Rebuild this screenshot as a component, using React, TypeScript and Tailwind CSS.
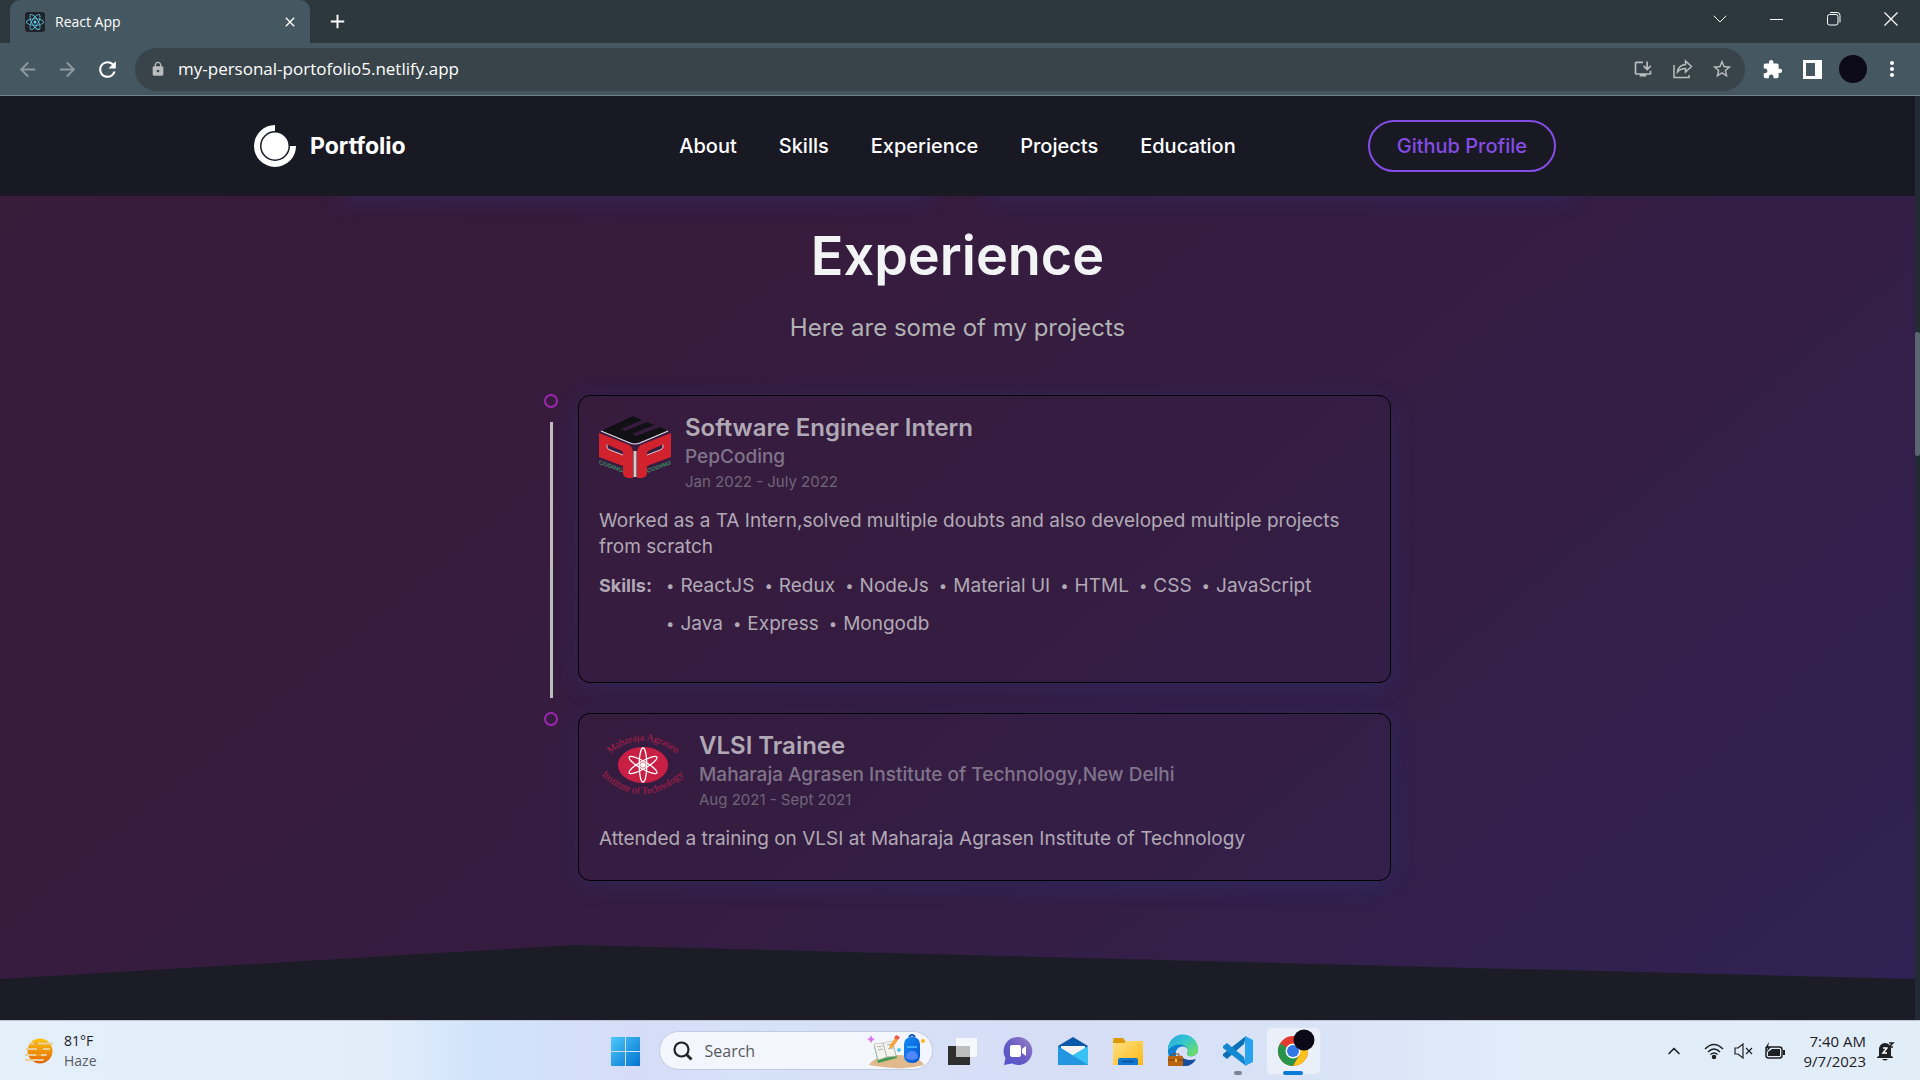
import React from "react";
import {
  MdArrowBack,
  MdArrowForward,
  MdClose,
  MdExtension,
  MdInstallDesktop,
  MdLock,
  MdMoreVert,
  MdRefresh,
  MdStarBorder,
  MdAdd,
} from "react-icons/md";
import { FaReact } from "react-icons/fa";
import { ChevronDown, ChevronUp } from "lucide-react";

const navLinks = ["About", "Skills", "Experience", "Projects", "Education"];

type Job = {
  role: string;
  company: string;
  date: string;
  text: string;
  skills: string[];
  logo: React.ReactNode;
};

function PepLogo() {
  return (
    <svg width="72" height="72" viewBox="0 0 72 72" role="img" aria-label="PepCoding" className="shrink-0 overflow-visible">
      <path d="M34 0 2 15 34 28 69 15 61 11 37 20 33 18 55 9 48 6 26 15 22 13 43 4Z" fill="#101015" />
      <path d="M2 15 31 27Q36 29 41 27L69 15" fill="none" stroke="#e6dfe6" strokeWidth="1.2" />
      <path fillRule="evenodd" fill="#d2222d" d="M0 17 28 28Q34 30 34 37V62H29Q24 61 24 57V50L0 41ZM8 28.500V31Q8 33 11 34L24 39V37Q24 35 21 34Z" />
      <path fillRule="evenodd" fill="#d2222d" d="M72 17 44 28Q38 30 38 37V62H43Q48 61 48 57V50L72 41ZM64 28.500V31Q64 33 61 34L48 39V37Q48 35 51 34Z" />
      <path d="M8 28.500V31Q8 33 11 34L24 39M64 28.500V31Q64 33 61 34L48 39" fill="none" stroke="#d9ccd3" strokeWidth="1" />
      <path d="M36 35V61" stroke="#cfcfcf" strokeWidth="3" />
      <text transform="matrix(1 .36 0 1 0 48)" fontFamily="Liberation Sans" fontWeight="700" fontSize="6" fill="#3d8d63">CODING</text>
      <text transform="matrix(1 -.36 0 1 48 57)" fontFamily="Liberation Sans" fontWeight="700" fontSize="6" fill="#3d8d63">CODING</text>
    </svg>
  );
}

function InstituteLogo() {
  return (
    <svg width="86" height="64" viewBox="0 0 86 64" role="img" aria-label="Maharaja Agrasen Institute of Technology" className="shrink-0 overflow-visible">
      <defs>
        <path id="arc-top" d="M8 22Q44 -9 80 22" />
        <path id="arc-bottom" d="M-3 36Q43 84 90 36" />
      </defs>
      <ellipse cx="44" cy="31" rx="25" ry="18" fill="#c91f45" />
      <g fill="none" stroke="#fff" strokeWidth="1.3">
        <ellipse cx="44" cy="31" rx="3.8" ry="17" />
        <ellipse cx="44" cy="31" rx="3.8" ry="16" transform="rotate(60 44 31)" />
        <ellipse cx="44" cy="31" rx="3.8" ry="16" transform="rotate(-60 44 31)" />
      </g>
      <circle cx="44" cy="31" r="2.8" fill="#fff" />
      <g fontFamily="Liberation Serif" fontSize="10" fill="#b51f49">
        <text textAnchor="middle"><textPath href="#arc-top" startOffset="50%">Maharaja Agrasen</textPath></text>
        <text textAnchor="middle"><textPath href="#arc-bottom" startOffset="50%">Institute of Technology</textPath></text>
      </g>
    </svg>
  );
}

const jobs: Job[] = [
  {
    role: "Software Engineer Intern",
    company: "PepCoding",
    date: "Jan 2022 - July 2022",
    text: "Worked as a TA Intern,solved multiple doubts and also developed multiple projects from scratch",
    skills: ["ReactJS", "Redux", "NodeJs", "Material UI", "HTML", "CSS", "JavaScript", "Java", "Express", "Mongodb"],
    logo: <PepLogo />,
  },
  {
    role: "VLSI Trainee",
    company: "Maharaja Agrasen Institute of Technology,New Delhi",
    date: "Aug 2021 - Sept 2021",
    text: "Attended a training on VLSI at Maharaja Agrasen Institute of Technology",
    skills: [],
    logo: <InstituteLogo />,
  },
];

function BrowserChrome() {
  return (
    <div className="shrink-0 bg-[#2d383e] font-['Open_Sans',sans-serif] text-white">
      <div className="flex h-[43px] items-stretch pl-[10px]">
        <div className="flex w-[300px] items-center rounded-t-[10px] bg-[#455760] pl-[15px] pr-3">
          <span className="grid size-5 place-items-center rounded-[3px] bg-[#20232a]">
            <FaReact size={18} color="#61c9e8" />
          </span>
          <span className="ml-[10px] flex-1 text-[14px]">React App</span>
          <button aria-label="Close tab"><MdClose size={16} /></button>
        </div>
        <button aria-label="New tab" className="ml-[16px]"><MdAdd size={23} /></button>
        <div className="ml-auto flex items-center pb-[6px]">
          <button aria-label="Search tabs" className="grid w-[57px] place-items-center"><ChevronDown size={24} strokeWidth={1} /></button>
          <button aria-label="Minimize" className="grid w-[57px] place-items-center"><svg width="14" height="14"><path d="M0 7.5h13" stroke="white" /></svg></button>
          <button aria-label="Restore" className="grid w-[57px] place-items-center">
            <svg width="14" height="14" fill="none" stroke="white"><rect x=".5" y="2.5" width="10.5" height="10.5" rx="2" /><path d="M3 .5h7a3 3 0 0 1 3 3v7" /></svg>
          </button>
          <button aria-label="Close" className="grid w-[58px] place-items-center"><svg width="14" height="14"><path d="m.5.5 13 13m0-13-13 13" stroke="white" strokeWidth="1.2" /></svg></button>
        </div>
      </div>
      <div className="flex h-[53px] items-center border-b border-[#75828a] bg-[#455760] pl-[16px] pr-4">
        <button aria-label="Back" className="text-[#8e9a9f]"><MdArrowBack size={23} /></button>
        <button aria-label="Forward" className="ml-[17px] text-[#8e9a9f]"><MdArrowForward size={23} /></button>
        <button aria-label="Reload" className="ml-[16px]"><MdRefresh size={25} /></button>
        <div className="ml-[15px] flex h-[43px] flex-1 items-center rounded-full bg-[#38444a] pl-[15px] pr-3 text-[#babdbf]">
          <MdLock size={16} />
          <input aria-label="Address" className="ml-[12px] flex-1 bg-transparent text-[17px] text-white outline-none" defaultValue="my-personal-portofolio5.netlify.app" />
          <button aria-label="Install app"><MdInstallDesktop size={20} /></button>
          <button aria-label="Share" className="ml-5">
            <svg width="20" height="20" viewBox="0 0 20 20" fill="none" stroke="currentColor" strokeWidth="1.5"><path d="M1 6v12.5h15V16M12.500 2v3.500C7 6 5 9 4.500 13 6.500 10.500 9 9.500 12.500 9.500V13l6-5.500z" /></svg>
          </button>
          <button aria-label="Bookmark" className="ml-[18px]"><MdStarBorder size={22} /></button>
        </div>
        <button aria-label="Extensions" className="ml-[17px]"><MdExtension size={21} /></button>
        <button aria-label="Side panel" className="ml-5">
          <svg width="19" height="19"><path fillRule="evenodd" fill="white" d="M0 0h19v19H0ZM3 3v13h9V3Z" /></svg>
        </button>
        <button aria-label="Profile" className="ml-[17px] size-7 rounded-full bg-[#0c0a18]" />
        <button aria-label="Menu" className="ml-[13px]"><MdMoreVert size={24} /></button>
      </div>
    </div>
  );
}

function SiteHeader() {
  return (
    <header className="bg-[#191924]">
      <div className="mx-auto grid h-[100px] max-w-[1407px] grid-cols-[1fr_auto_1fr] items-center">
        <a href="#home" className="flex items-center gap-[14px] text-[23px] font-bold text-white">
          <svg width="42" height="42" viewBox="0 0 42 42">
            <circle cx="21" cy="21" r="13.500" fill="white" />
            <path d="M21 3a18 18 0 1 0 18 18" fill="none" stroke="white" strokeWidth="6" />
          </svg>
          Portfolio
        </a>
        <nav className="flex gap-[42px] text-[20px] font-medium text-white">
          {navLinks.map((l) => (
            <a key={l} href={"#" + l.toLowerCase()}>{l}</a>
          ))}
        </nav>
        <div className="flex justify-end pr-[105px]">
          <a href="#github" className="flex h-[52px] items-center rounded-full border-2 border-[#854ce6] px-[27px] text-[20px] font-medium whitespace-nowrap text-[#854ce6]">Github Profile</a>
        </div>
      </div>
    </header>
  );
}

function TimelineRow({ job, last }: { job: Job; last: boolean }) {
  return (
    <li className="flex gap-5">
      <div className="flex w-[14px] flex-col items-center pt-[14px]">
        <span className="size-[14px] shrink-0 rounded-full border-2 border-[#9c27b0]" />
        {!last && <span className="mt-[14px] w-[3px] flex-1 bg-[#bdbdbd]" />}
      </div>
      <div className="flex-1 py-[15px]">
        <article className="rounded-xl border border-black px-5 pt-5 pb-7 shadow-[0_4px_24px_rgba(23,92,230,0.15)]">
          <div className="flex gap-[14px]">
            {job.logo}
            <div>
              <h3 className="text-[24px] leading-[24px] font-semibold text-[#b1a9b5]">{job.role}</h3>
              <p className="mt-1 text-[19px] leading-[26px] font-medium text-[#80748a]">{job.company}</p>
              <p className="text-[15px] leading-[24px] text-[#716579]">{job.date}</p>
            </div>
          </div>
          <p className="mt-[14px] text-[19px] leading-[26px] text-[#b1a9b5]">{job.text}</p>
          {job.skills.length > 0 && (
            <div className="mt-[7px] mb-[11px] flex gap-[14px] leading-[38px] text-[#b1a9b5]">
              <b className="text-[18px]">Skills:</b>
              <ul className="flex flex-wrap gap-x-[10px] pr-4 text-[19px]">
                {job.skills.map((s) => (
                  <li key={s} className="flex gap-[6px]">
                    <span className="text-[15px]">•</span>
                    {s}
                  </li>
                ))}
              </ul>
            </div>
          )}
        </article>
      </div>
    </li>
  );
}

function Experience() {
  return (
    <section id="experience" className="relative overflow-hidden bg-[linear-gradient(140deg,#391b3a_0%,#351c40_50%,#312253_100%)] px-6 pt-8 pb-[83px] [clip-path:polygon(0_0,100%_0,100%_100%,30%_calc(100%-34px),0_100%)]">
      <div className="absolute inset-x-[340px] -top-5 flex gap-[56px]">
        <span className="h-5 flex-1 shadow-[0_4px_24px_rgba(23,92,230,0.15)]" />
        <span className="h-5 flex-1 shadow-[0_4px_24px_rgba(23,92,230,0.15)]" />
      </div>
      <h2 className="text-center text-[54px] leading-[56px] font-semibold text-[#f2f3f4]">Experience</h2>
      <p className="mt-7 text-center text-[24px] leading-8 text-[#b1b2b3]">Here are some of my projects</p>
      <ul className="mx-auto mt-9 max-w-[867px] pl-5">
        {jobs.map((j, i) => (
          <TimelineRow key={j.role} job={j} last={i === jobs.length - 1} />
        ))}
      </ul>
    </section>
  );
}

function AppIcon({ label, children, className = "" }: { label: string; children: React.ReactNode; className?: string }) {
  return (
    <button aria-label={label} className={"relative grid h-12 w-[55px] place-items-center " + className}>
      <svg width="32" height="32" viewBox="0 0 32 32" className="overflow-visible">{children}</svg>
    </button>
  );
}

function Taskbar() {
  return (
    <footer className="grid h-[60px] shrink-0 grid-cols-[1fr_auto_1fr] items-center border-t border-[#bfc5d2] bg-[linear-gradient(90deg,#e3eff9_0%,#e1edf9_20%,#d1e3fb_25%,#d6dcf7_33%,#d5e2f8_38%,#d6def6_55%,#d8e3f7_68%,#e0edf9_80%,#e1eef8_100%)] font-['Open_Sans',sans-serif] text-[#1e2124]">
      <svg width="0" height="0" className="absolute">
        <defs>
          <linearGradient id="win" x1="0" y1="0" x2="1" y2="1"><stop stopColor="#4cc9fb" /><stop offset="1" stopColor="#0373d1" /></linearGradient>
          <linearGradient id="sun" x1="0" y1="0" x2="0" y2="1"><stop stopColor="#fbc40d" /><stop offset="1" stopColor="#e36309" /></linearGradient>
          <linearGradient id="chat" x1="1" y1="0" x2="0" y2="1"><stop stopColor="#9a86c4" /><stop offset=".5" stopColor="#6a5cc6" /><stop offset="1" stopColor="#5254c9" /></linearGradient>
          <linearGradient id="folder" x1="0" y1="0" x2="1" y2="1"><stop stopColor="#ffe084" /><stop offset="1" stopColor="#fdb913" /></linearGradient>
          <linearGradient id="edge" x1="0" y1="0" x2="1" y2="1"><stop stopColor="#2a9fe0" /><stop offset=".4" stopColor="#31c5d2" /><stop offset="1" stopColor="#79e34b" /></linearGradient>
          <linearGradient id="bag" x1="0" y1="0" x2="1" y2="1"><stop stopColor="#158bf5" /><stop offset="1" stopColor="#0752cf" /></linearGradient>
        </defs>
      </svg>
      <button className="flex items-center gap-[11px] pl-[25px] text-left">
        <svg width="28" height="28" viewBox="0 0 28 28">
          <circle cx="15" cy="14" r="12.500" fill="url(#sun)" />
          <path d="M5 6.500h22M2 12h22M0 18h21M0 23h18" stroke="#e8cf9b" strokeWidth="2.200" strokeLinecap="round" />
          <path d="M9 6.500h4M12 12h6M11 18h5" stroke="#f59e0b" strokeWidth="2.200" />
        </svg>
        <span className="text-[14px] leading-5">
          <span className="block">81°F</span>
          <span className="block text-[#595d62]">Haze</span>
        </span>
      </button>
      <div className="flex items-center pr-[2px]">
        <AppIcon label="Start">
          <path d="M2 2h14v14H2zM17 2h14v14H17zM2 17h14v14H2zM17 17h14v14H17z" fill="url(#win)" />
        </AppIcon>
        <label className="mr-[3px] ml-[6px] flex h-[39px] w-[274px] items-center rounded-full border border-[#c2cbe0] bg-[#f3f6fd] pl-[13px]">
          <svg width="20" height="20" viewBox="0 0 20 20" fill="none" stroke="#222" strokeWidth="2.200"><circle cx="8.500" cy="8.500" r="7" /><path d="m13.500 13.500 5 5" strokeWidth="2.800" /></svg>
          <input aria-label="Search" placeholder="Search" className="ml-3 w-[150px] bg-transparent text-[16px] outline-none placeholder:text-[#55585c]" />
          <svg width="62" height="36" viewBox="0 0 62 36" className="ml-[10px]">
            <path d="M4 32Q10 22 32 22T59 32Q45 36 30 35T4 32Z" fill="#e0b98c" />
            <path d="m9 13 19-3 4 15-19 5z" fill="#459b4d" />
            <path d="m9 11 9-1 9-2 4 15-9 1-9 3z" fill="#f4f4ef" stroke="#b8bcc0" strokeWidth=".7" />
            <path d="m18 10 4 15M12 14l5-1m-4 4 5-1m4-4 5-1m-4 5 5-1" stroke="#9aa5a8" strokeWidth=".8" />
            <path d="m24 16 1-4 5-7 3 2-5 7z" fill="#f6a53b" /><path d="m29 5 2-3 4 2-2 3z" fill="#ec5a44" />
            <path d="M2 6q3 0 4-4 1 4 4 4-3 1-4 4Q5 7 2 6Z" fill="#d976ee" />
            <circle cx="34" cy="17" r="2" fill="#54c8ef" /><circle cx="58" cy="8" r="2" fill="#fbb413" />
            <path d="M44 4q3-4 6 0" fill="none" stroke="#0a51b5" strokeWidth="2" />
            <rect x="39" y="4" width="16" height="26" rx="7" fill="url(#bag)" />
            <path d="M42 14h10" stroke="#4ec3ff" strokeWidth="1.500" />
            <path d="M41 25q0-7 6-7t6 7q-6 4-12 0Z" fill="#4f86fa" />
          </svg>
        </label>
        <AppIcon label="Task view">
          <path d="M1 11h22v19H1z" fill="#2f2f2f" /><path d="M9 3h21v19H9z" fill="#fafafa" opacity=".9" /><path d="M9 11h14v11H9z" fill="#bdbdbd" />
        </AppIcon>
        <AppIcon label="Chat">
          <path d="M16 2a14 14 0 1 1-6 26.500L2 30l1.500-7A14 14 0 0 1 16 2Z" fill="url(#chat)" />
          <rect x="8" y="10" width="11" height="12" rx="2" fill="#fff" /><path d="m20 14 4-3v10l-4-3z" fill="#fff" />
        </AppIcon>
        <AppIcon label="Mail">
          <path d="M1 11 16 2l15 9v5H1z" fill="#0a58a8" /><path d="M4 11h24v14H4z" fill="#f3f3f3" /><path d="M31 11v19H1V29z" fill="#38c2f3" /><path d="M1 11 31 30H1z" fill="#2396e2" />
        </AppIcon>
        <AppIcon label="File Explorer">
          <path d="M1 5q0-2 2-2h8l3 4h15q2 0 2 2v4H1z" fill="#dc9a08" /><path d="M1 8h11l3-2h16v24H1z" fill="url(#folder)" /><path d="M6 30v-5q0-2 2-2h16q2 0 2 2v5z" fill="#1176cf" /><path d="M10 26.500h12" stroke="#075199" strokeWidth="1.500" />
        </AppIcon>
        <AppIcon label="Edge">
          <path d="M1 16A15 15 0 0 1 31 14c0 6-5 8-9 7-3-1-2-3-1-5 0-5-9-7-12 0-1 7 3 11 8 14C7 31 1 25 1 16Z" fill="#0d7fd0" />
          <path d="M1 15A15 15 0 0 1 31 14c0 6-5 8-9 7-3-1-2-3-1-5C20 8 8 7 1 15Z" fill="url(#edge)" />
          <path d="M14 20q3 7 15 4-4 8-13 7-5-4-2-11Z" fill="#174d9d" />
          <circle cx="16" cy="17" r="3.500" fill="#d6def6" />
          <rect x="1" y="21" width="15" height="10" rx="1" fill="#ba6410" /><path d="M1 25h15" stroke="#7c3e08" /><path d="M8 24h2v3H8z" fill="#ffc63b" /><path d="M5 21v-2h7v2" fill="none" stroke="#8a480c" />
        </AppIcon>
        <AppIcon label="Visual Studio Code">
          <path d="m24 1-2 8L5 24l-4-3v-2z" fill="#0b70b5" /><path d="m5 8-4 3v2l23 18-2-9z" fill="#1288d2" /><path d="m23 1 8 4v22l-8 4z" fill="#27a3ef" />
          <rect x="12" y="36" width="8" height="4" rx="2" fill="#7e8492" />
        </AppIcon>
        <AppIcon label="Chrome" className="rounded-md border border-[#dde5f3] bg-[#eaf0fa]">
          <circle cx="16" cy="16" r="15" fill="#e33b2e" /><path d="M16 16 3 8.500A15 15 0 0 0 16 31l6-11z" fill="#26954a" /><path d="M16 9h13.300A15 15 0 0 1 16 31l7-12z" fill="#fcc31c" /><circle cx="16" cy="16" r="7.500" fill="#fff" /><circle cx="16" cy="16" r="6" fill="#2f78e6" />
          <circle cx="27" cy="5" r="10.500" fill="#0c0a18" />
          <rect x="6" y="36" width="20" height="4" rx="2" fill="#0b7bd8" />
        </AppIcon>
      </div>
      <div className="flex items-center justify-end pr-[25px]">
        <button aria-label="Hidden icons"><ChevronUp size={20} strokeWidth={2} /></button>
        <svg width="20" height="18" viewBox="0 0 20 18" fill="none" stroke="currentColor" strokeWidth="1.500" className="ml-5"><path d="M1 7q9-9 18 0M4 10q6-6 12 0M6.500 12.500q3.500-3 7 0" /><circle cx="10" cy="15" r="1.500" fill="currentColor" /></svg>
        <svg width="20" height="18" viewBox="0 0 20 18" fill="none" stroke="currentColor" strokeWidth="1.200" className="ml-[10px]"><path d="M1 6h3l5-4v14l-5-4H1zM12 6l6 6m0-6-6 6" /></svg>
        <svg width="22" height="18" viewBox="0 0 22 18" className="ml-[10px]"><rect x="2" y="5" width="16" height="11" rx="2.500" fill="none" stroke="#1e2124" strokeWidth="1.500" /><path d="M4 10l4-3h8v7H4zM19 8h2v5h-2z" fill="#1e2124" /><path d="M5 0 1 6h3l-2 5 5-6H4z" fill="#1e2124" /></svg>
        <span className="ml-[18px] text-right text-[15px] leading-5"><span className="block">7:40 AM</span><span className="block">9/7/2023</span></span>
        <svg width="18" height="20" viewBox="0 0 18 20" className="ml-[11px]"><path d="M2 15V8a6 6 0 0 1 12 0v7l2 1v1H0v-1zM5 18h6q-3 3-6 0Z" fill="#1e2124" /><path d="M6 7h4l-4 5h4" fill="none" stroke="#fff" strokeWidth="1.500" /><path d="M12 2h4l-4 4h4" fill="none" stroke="#1e2124" strokeWidth="1.500" /></svg>
      </div>
    </footer>
  );
}

export default function App() {
  return (
    <div className="flex h-screen flex-col overflow-hidden bg-[#1c1c27]">
      <BrowserChrome />
      <div className="flex min-h-0 flex-1">
        <main className="min-w-0 flex-1 overflow-hidden font-[Inter,sans-serif]">
          <SiteHeader />
          <Experience />
        </main>
        <div className="w-[5px] bg-[#222a33] pt-[236px]">
          <div className="h-[124px] rounded-full bg-[#5b6770]" />
        </div>
      </div>
      <Taskbar />
    </div>
  );
}
